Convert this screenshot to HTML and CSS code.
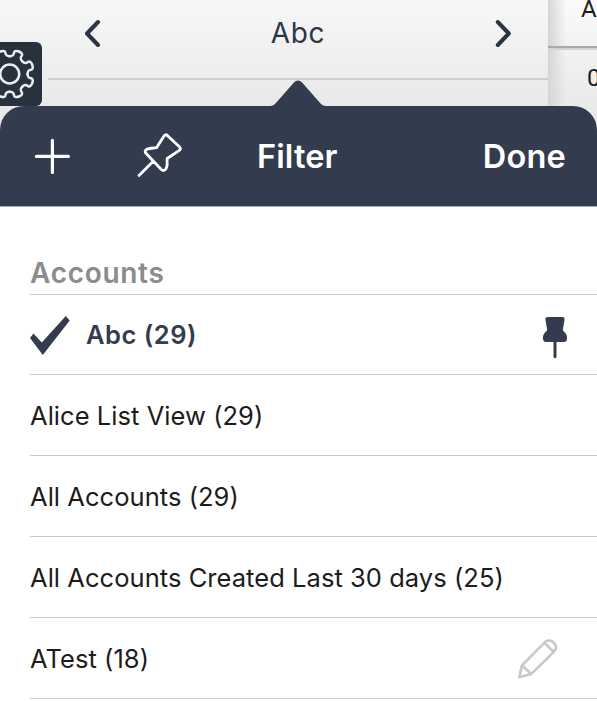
FILE: index.html
```html
<!DOCTYPE html>
<html lang="en">
<head>
<meta charset="utf-8">
<title>Filter</title>
<link rel="stylesheet" href="styles.css">
</head>
<body>
<div class="backdrop">
  <div class="pane">
    <nav class="pager">
      <svg class="chevron" width="18" height="28" viewBox="0 0 18 28"><path d="M15 3 4 14.500 15 26"/></svg>
      <span class="pager-title">Abc</span>
      <svg class="chevron" width="18" height="28" viewBox="0 0 18 28"><path d="M2.800 3 13.800 14.500 2.800 26"/></svg>
    </nav>
  </div>
  <div class="side">
    <div class="side-cell side-head">A</div>
    <div class="side-cell">0</div>
  </div>
  <div class="settings">
    <svg width="42" height="64" viewBox="0 0 42 64">
      <defs><path id="tooth" d="M16.500-6.840C18-3.300 19.500-3.700 21.500-4.200C25.300-5 25.300 5 21.500 4.200C19.500 3.700 18 3.300 16.500 6.840"/></defs>
      <g transform="translate(9.700 32)">
        <circle r="9.500"/>
        <use href="#tooth" transform="rotate(22.500)"/><use href="#tooth" transform="rotate(67.500)"/>
        <use href="#tooth" transform="rotate(112.500)"/><use href="#tooth" transform="rotate(157.500)"/>
        <use href="#tooth" transform="rotate(202.500)"/><use href="#tooth" transform="rotate(247.500)"/>
        <use href="#tooth" transform="rotate(292.500)"/><use href="#tooth" transform="rotate(337.500)"/>
      </g>
    </svg>
  </div>
</div>
<main class="popover">
  <svg class="arrow" width="56" height="27" viewBox="0 0 56 27"><path d="M0 27V26Q3 26 5 24L23.500 3Q28-1.800 32.500 3L51 24Q53 26 56 26V27Z"/></svg>
  <header class="bar">
    <svg class="bar-icon plus" width="36" height="36" viewBox="0 0 36 36"><path d="M18.400 2.400V34.400M2.400 18.400H34.400"/></svg>
    <svg class="bar-icon pin" width="48" height="48" viewBox="0 0 48 48"><path d="M31.300 5.400 43.700 17.100Q45.400 19 43.300 20.400L31.200 28.500C30.400 31.200 32.700 36.300 29.200 39.700Q27.300 41.300 25.300 39.500L9.900 23.300Q8.200 21.300 10.300 19.700C13 17.800 17 18.200 20.500 17.700L28 6Q29.600 3.900 31.300 5.400ZM17 31.500 3 45.500"/></svg>
    <h1 class="bar-title">Filter</h1>
    <span class="done">Done</span>
  </header>
  <section class="list">
    <h2 class="section-title">Accounts</h2>
    <div class="row selected">
      <svg class="check" width="42" height="42" viewBox="0 0 42 42"><path d="M0 24 3.500 19.500 11.800 28.500 35.800 2 39.700 6.500 12.800 41Z"/></svg>
      <span class="label">Abc (29)</span>
      <svg class="pinned" width="28" height="44" viewBox="0 0 28 44"><path d="M7 2H21Q24 2 23.500 5L21.800 15C23.500 17.500 26.500 19 26 24Q25.700 27 23 27H5Q2.300 27 2 24C1.500 19 4.500 17.500 6.200 15L4.500 5Q4 2 7 2Z"/><path d="M12.500 27H15.500V42Q14 44.500 12.500 42Z"/></svg>
    </div>
    <div class="row"><span class="label">Alice List View (29)</span></div>
    <div class="row"><span class="label">All Accounts (29)</span></div>
    <div class="row"><span class="label">All Accounts Created Last 30 days (25)</span></div>
    <div class="row">
      <span class="label">ATest (18)</span>
      <svg class="edit" width="42" height="42" viewBox="0 0 42 42"><path d="M2.200 39.200 5 27.400 28 4.100C33.500-1.100 42.500 7.400 37.300 13.400L14.500 35.900ZM5 27.400 14.500 35.900M27.300 4.700 36.800 13.900"/></svg>
    </div>
  </section>
</main>
</body>
</html>
```
FILE: styles.css
```css
* { box-sizing: border-box; }
body {
  margin: 0;
  width: 597px;
  height: 701px;
  overflow: hidden;
  background: #fff;
  color: #1c1c1c;
  font-family: Inter, "Liberation Sans", sans-serif;
}
svg { display: block; flex: none; fill: none; stroke-linecap: round; stroke-linejoin: round; }

.backdrop { position: relative; display: flex; height: 140px; }
.pane { width: 548px; padding-left: 48px; background: linear-gradient(#f7f7f7, #e9e9e9 106px); }
.pager {
  display: flex;
  align-items: center;
  justify-content: space-between;
  height: 80px;
  padding: 0 35px 12px;
  border-bottom: 2px solid #cfcfcf;
}
.chevron { stroke: #2b3544; stroke-width: 4; }
.pager-title { font-size: 28px; line-height: 34px; letter-spacing: 0.7px; color: #2b3544; }
.side {
  flex: 1;
  overflow: hidden;
  background: linear-gradient(90deg, #d5d5d5, #dedede00 18px), linear-gradient(#fafafa, #e9e9e9 106px);
}
.side-cell { height: 60px; padding: 11px 0 0 39px; font: 24px/34px Roboto, sans-serif; color: #1c1c1c; }
.side-head { height: 50px; padding: 0 0 0 33px; line-height: 18px; border-bottom: 2px solid #d3d3d3; box-shadow: inset 0 -2px #aaa; }
.settings {
  position: absolute;
  left: 0;
  top: 42px;
  width: 42px;
  height: 64px;
  overflow: hidden;
  border-radius: 0 6px 6px 0;
  background: #28323f;
}
.settings svg { stroke: #e9edf2; stroke-width: 2.5; }

.popover { position: relative; margin-top: -34px; }
.arrow { position: absolute; left: 270px; top: -26px; fill: #333b4e; }
.bar {
  display: flex;
  align-items: center;
  height: 101px;
  padding: 0 31px 0 34px;
  border-bottom: 1px solid #a9acb5;
  border-radius: 24px 24px 0 0;
  background: #333b4e;
  color: #fff;
}
.bar-icon { stroke: #fff; stroke-width: 3.2; }
.pin { margin: -5px 0 0 66px; stroke-width: 2.8; }
.bar-title, .done { font-size: 32.5px; line-height: 40px; font-weight: 600; }
.bar-title { margin: 2px 0 0 73px; letter-spacing: 0.1px; }
.done { margin: 2px 0 0 auto; letter-spacing: 0.2px; }

.list { padding-left: 30px; background: #fff; }
.section-title {
  margin: 0;
  height: 88px;
  padding-top: 48px;
  border-bottom: 1px solid #c8c8c8;
  font-size: 28px;
  line-height: 36px;
  font-weight: 600;
  letter-spacing: 0.7px;
  color: #8b8b8d;
}
.row { display: flex; align-items: center; height: 81px; border-bottom: 1px solid #c8c8c8; }
.label { margin-top: 1px; font-size: 25.5px; line-height: 32px; letter-spacing: 0.05px; }
.selected { height: 80px; color: #333b4e; }
.selected .label { margin-left: 14px; font-weight: 600; letter-spacing: 0.5px; }
.check { fill: #333b4e; }
.pinned { margin: 4px 28px 0 auto; fill: #333b4e; }
.edit { margin: 2px 38px 0 auto; stroke: #c9c9c9; stroke-width: 2.7; }
```
